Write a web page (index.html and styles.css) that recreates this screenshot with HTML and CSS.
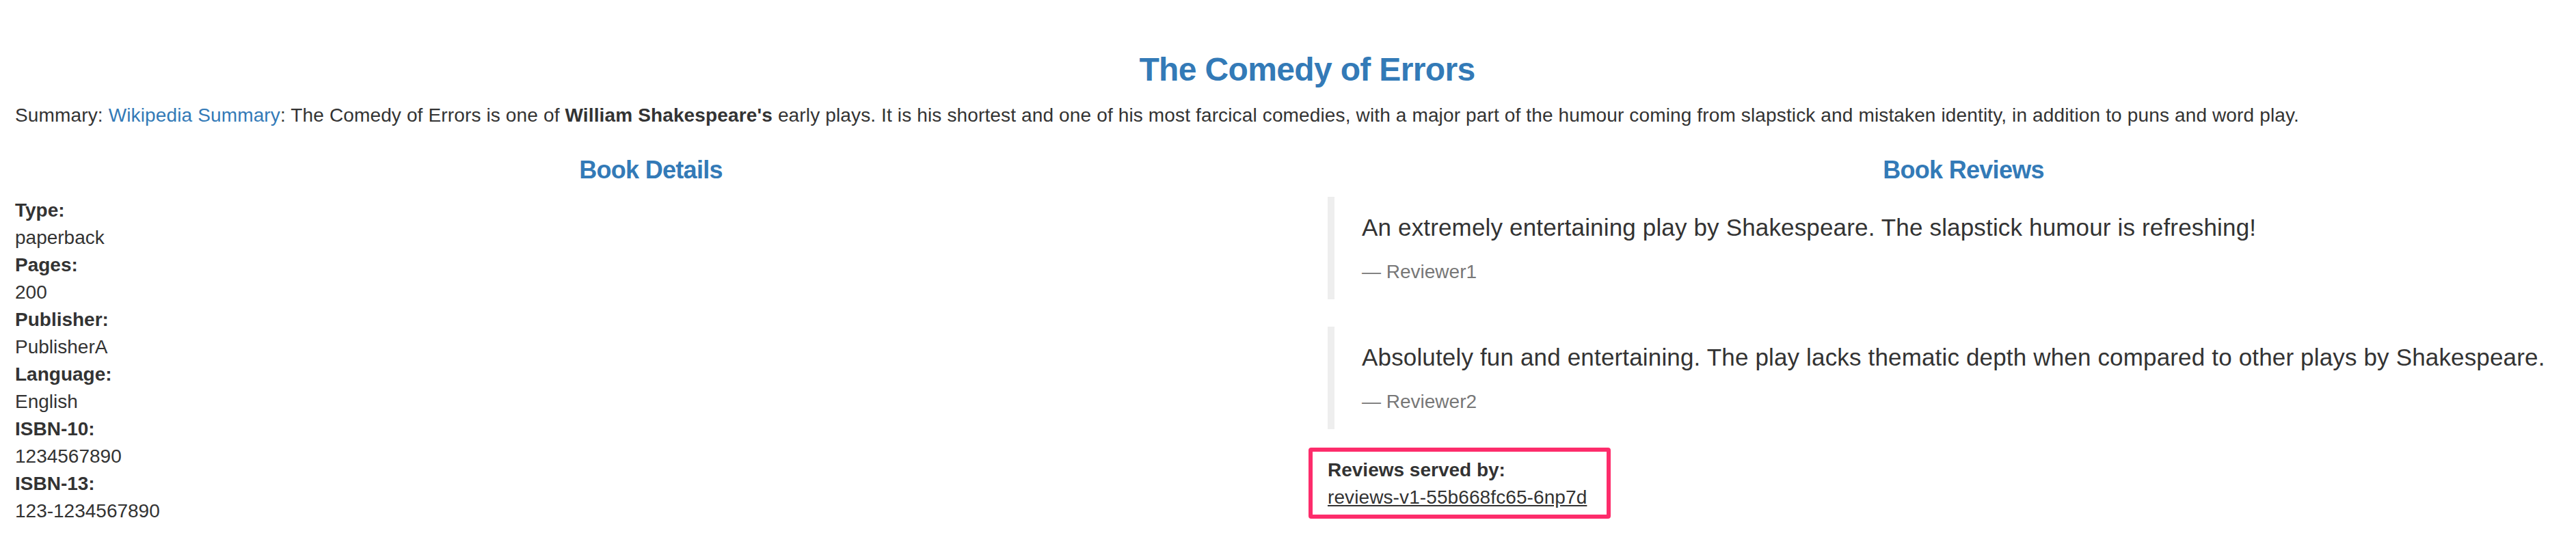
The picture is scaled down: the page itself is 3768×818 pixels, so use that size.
FILE: index.html
```html
<!DOCTYPE html>
<html lang="en">
<head>
<meta charset="utf-8">
<title>Simple Bookstore App</title>
<link rel="stylesheet" href="styles.css">
</head>
<body>
<div class="container">
  <h3 class="title">The Comedy of Errors</h3>
  <p class="summary">Summary: <a class="wiki" href="#">Wikipedia Summary</a>: The Comedy of Errors is one of <b>William Shakespeare's</b> early plays. It is his shortest and one of his most farcical comedies, with a major part of the humour coming from slapstick and mistaken identity, in addition to puns and word play.</p>
  <div class="row">
    <div class="col">
      <h4 class="section-title">Book Details</h4>
      <dl class="details">
        <dt>Type:</dt><dd>paperback</dd>
        <dt>Pages:</dt><dd>200</dd>
        <dt>Publisher:</dt><dd>PublisherA</dd>
        <dt>Language:</dt><dd>English</dd>
        <dt>ISBN-10:</dt><dd>1234567890</dd>
        <dt>ISBN-13:</dt><dd>123-1234567890</dd>
      </dl>
    </div>
    <div class="col">
      <h4 class="section-title">Book Reviews</h4>
      <blockquote class="review">
        <p>An extremely entertaining play by Shakespeare. The slapstick humour is refreshing!</p>
        <small>Reviewer1</small>
      </blockquote>
      <blockquote class="review">
        <p>Absolutely fun and entertaining. The play lacks thematic depth when compared to other plays by Shakespeare.</p>
        <small>Reviewer2</small>
      </blockquote>
      <dl class="served">
        <dt>Reviews served by:</dt>
        <dd><u>reviews-v1-55b668fc65-6np7d</u></dd>
        <div class="highlight"></div>
      </dl>
    </div>
  </div>
</div>
</body>
</html>
```
FILE: styles.css
```css
html, body {
  margin: 0;
  padding: 0;
  overflow: hidden;
  background: #fff;
}

body {
  font-family: "Liberation Sans", Arial, Helvetica, sans-serif;
  font-size: 28px;
  line-height: 40px;
  color: #333;
}

.container {
  box-sizing: border-box;
  width: 3840px;
  margin-left: -8px;
  padding: 36px 30px 0;
}

.title {
  margin: 40px 0 20px;
  font-size: 48px;
  line-height: 1.1;
  font-weight: 700;
  letter-spacing: -0.65px;
  color: #337ab7;
  text-align: center;
}

.summary {
  margin: 0 0 20px;
  letter-spacing: 0.14px;
}

.wiki {
  color: #337ab7;
  text-decoration: none;
}

.row {
  display: grid;
  grid-template-columns: 1fr 1fr;
  margin: 0 -30px;
}

.col {
  padding: 0 30px;
  min-width: 0;
}

.section-title {
  margin: 20px 0 20px;
  font-size: 36px;
  line-height: 1.1;
  font-weight: 700;
  letter-spacing: -0.7px;
  color: #337ab7;
  text-align: center;
}

.details,
.served {
  margin: 0 0 40px;
}

dt {
  font-weight: 700;
}

dd {
  margin: 0;
}

.served dd {
  letter-spacing: 0.1px;
}

.review {
  margin: 0 0 40px;
  padding: 20px 40px;
  border-left: 10px solid #eee;
  font-size: 35px;
  line-height: 50px;
}

.review p {
  margin: 0 0 20px;
  letter-spacing: 0.16px;
}

.review small {
  display: block;
  font-size: 28px;
  line-height: 40px;
  color: #777;
}

.review small::before {
  content: "\2014 \00A0";
}

.served {
  position: relative;
}

.highlight {
  position: absolute;
  top: -13px;
  left: -28px;
  width: 442px;
  height: 104px;
  box-sizing: border-box;
  border: 6px solid #fd2c6b;
  border-radius: 4px;
}
```
